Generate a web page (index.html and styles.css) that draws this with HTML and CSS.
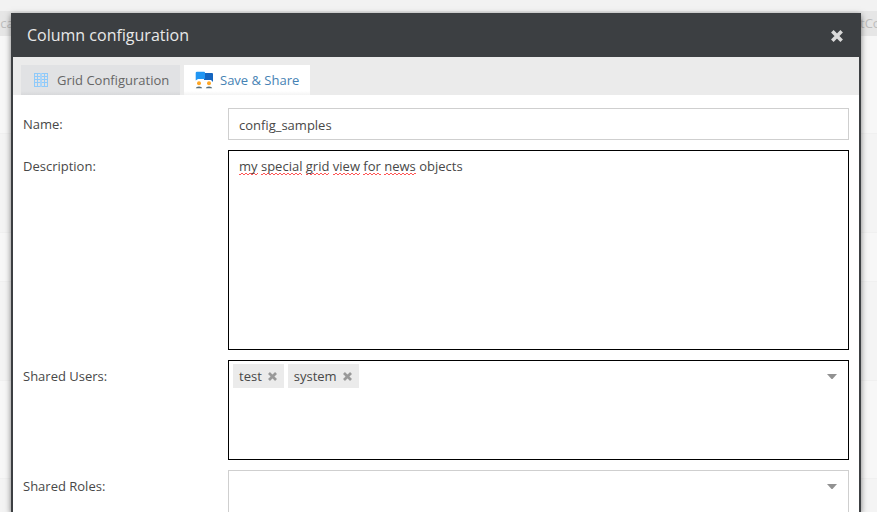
FILE: index.html
```html
<!DOCTYPE html>
<html lang="en">
<head>
<meta charset="utf-8">
<title>Column configuration</title>
<link rel="stylesheet" href="styles.css">
</head>
<body>
<div class="backdrop">
  <div class="grid-head"><span><i>i</i>ca</span><span class="end">tCo</span></div>
  <div class="row first"></div>
  <div class="row alt"></div>
  <div class="row short"></div>
  <div class="row alt"></div>
  <div class="row"></div>
  <div class="row alt last"></div>
</div>
<section class="dialog">
  <header class="title-bar">
    <h1>Column configuration</h1>
    <svg class="close" viewBox="0 0 12 12"><path d="M2.6 2.6 9.4 9.4M9.4 2.6 2.6 9.4"/></svg>
  </header>
  <nav class="tabs">
    <div class="tab">
      <svg class="grid-icon" viewBox="0 0 14 14"><path d="M.5 0v14M3.500 0v14M10.500 0v14M13.500 0v14M0 .5h14M0 3.500h14M0 6.500h14M0 9.500h14M0 13.500h14"/><path class="mid" d="M7 0v14"/></svg>
      <span>Grid Configuration</span>
    </div>
    <div class="tab active">
      <svg class="share-icon" viewBox="0 0 18 18">
        <path fill="#1565c0" d="M9 2h8q1 0 1 1v8l-2-2H9z"/>
        <path fill="#2196f3" d="M2 .8h7q1 0 1 1V7q0 1-1 1H3L.7 9.500V2Q.7.8 2 .8z"/>
        <circle cx="4" cy="12.300" r="2" fill="#ffa726"/><circle cx="14" cy="12.300" r="2" fill="#ffa726"/>
        <path fill="#546e7a" d="M.8 17.200q.2-1.700 3.200-1.700t3.200 1.700zM10.800 17.200q.2-1.700 3.200-1.700t3.200 1.700z"/>
      </svg>
      <span>Save &amp; Share</span>
    </div>
  </nav>
  <div class="form">
    <div class="label">Name:</div>
    <div class="field name">config_samples</div>
    <div class="label">Description:</div>
    <div class="field focus description"><u>my</u> <u>special</u> <u>grid</u> <u>view</u> <u>for</u> <u>news</u> objects</div>
    <div class="label">Shared Users:</div>
    <div class="field focus users">
      <span class="tag">test<svg viewBox="0 0 12 12"><path d="M2.600 2.600 9.400 9.400M9.400 2.600 2.600 9.400"/></svg></span>
      <span class="tag">system<svg viewBox="0 0 12 12"><path d="M2.600 2.600 9.400 9.400M9.400 2.600 2.600 9.400"/></svg></span>
      <svg class="arrow" viewBox="0 0 10 5"><path d="M0 0h10L5.500 5h-1z"/></svg>
    </div>
    <div class="label">Shared Roles:</div>
    <div class="field roles"><svg class="arrow" viewBox="0 0 10 5"><path d="M0 0h10L5.500 5h-1z"/></svg></div>
  </div>
</section>
</body>
</html>
```
FILE: styles.css
```css
* { box-sizing: border-box; }
body {
  margin: 0;
  height: 512px;
  overflow: hidden;
  position: relative;
  background: #f2f2f2;
  color: #484848;
  font: 13px/18px "Open Sans", sans-serif;
}
.backdrop { padding-top: 11px; }
.grid-head {
  height: 25px;
  display: flex;
  justify-content: space-between;
  background: #e6e6e6;
  color: #bdbdbd;
  line-height: 24px;
  overflow: hidden;
}
.grid-head span { margin-left: -3px; }
.grid-head i { color: #a5c8e4; font-style: normal; }
.grid-head .end { width: 17px; }
.row { height: 98px; background: #f7f7f7; border-bottom: 1px solid #f0f0f0; }
.row.alt { background: #f4f4f4; height: 99px; }
.row.short { height: 49px; }
.row.last { height: 33px; border: 0; }
.dialog {
  position: absolute;
  left: 11px;
  top: 13px;
  width: 850px;
  height: 499px;
  overflow: hidden;
  background: #fff;
  border: 2px solid #3c3f42;
  border-width: 0 2px;
  box-shadow: 0 2px 6px rgba(0, 0, 0, .5);
}
.title-bar {
  height: 44px;
  padding: 0 16px 0 14px;
  display: flex;
  align-items: center;
  justify-content: space-between;
  background: #3c3f42;
}
h1 { margin: 0; font-size: 16px; font-weight: 400; line-height: 44px; color: #e8e8e8; }
.close { width: 12px; height: 12px; margin-top: 2px; stroke: #dadada; stroke-width: 3.6; stroke-linecap: square; }
.tabs {
  height: 38px;
  padding: 8px 8px 0;
  display: flex;
  gap: 4px;
  background: #ebebeb;
}
.tab {
  height: 30px;
  width: 159px;
  padding-left: 11px;
  display: flex;
  align-items: center;
  background: linear-gradient(#e1e2e4 26px, #d7d8da);
  color: #666;
}
.tab.active { width: 126px; background: linear-gradient(#fff 26px, #f4f4f4); color: #4682b4; }
.grid-icon { width: 14px; height: 14px; margin: 0 9px 0 2px; fill: none; stroke: #90caf9; }
.grid-icon .mid { stroke: #a9d4f8; stroke-width: 2; }
.share-icon { width: 18px; height: 18px; margin-right: 7px; }
.form {
  padding: 13px 10px 0;
  display: grid;
  grid-template-columns: 205px 621px;
  grid-template-rows: 32px 200px 100px 42px;
  row-gap: 10px;
}
.label { padding-top: 7px; }
.field { border: 1px solid #cfcfcf; padding: 7px 10px; }
.field.focus { border-color: #000; }
.field.description { padding-top: 6px; }
.field.users { display: flex; align-items: flex-start; gap: 4px; padding: 3px 4px; }
.description u {
  padding-bottom: 0;
  text-decoration: none;
  background:
    linear-gradient(135deg, transparent 35%, #f55 35% 65%, transparent 65%) 0 100% / 4px 2px repeat-x,
    linear-gradient(45deg, transparent 35%, #f55 35% 65%, transparent 65%) 2px 100% / 4px 2px repeat-x;
}
.tag { height: 24px; padding: 0 7px 0 6px; display: flex; align-items: center; background: #ebebeb; }
.tag svg { width: 9px; height: 9px; margin-left: 6px; stroke: #999; stroke-width: 3.6; stroke-linecap: square; }
.arrow { width: 10px; height: 5px; fill: #919191; }
.users .arrow { margin: 10px 7px 0 auto; }
.roles { display: flex; justify-content: flex-end; padding: 13px 11px 0; border-bottom: 0; }
```
